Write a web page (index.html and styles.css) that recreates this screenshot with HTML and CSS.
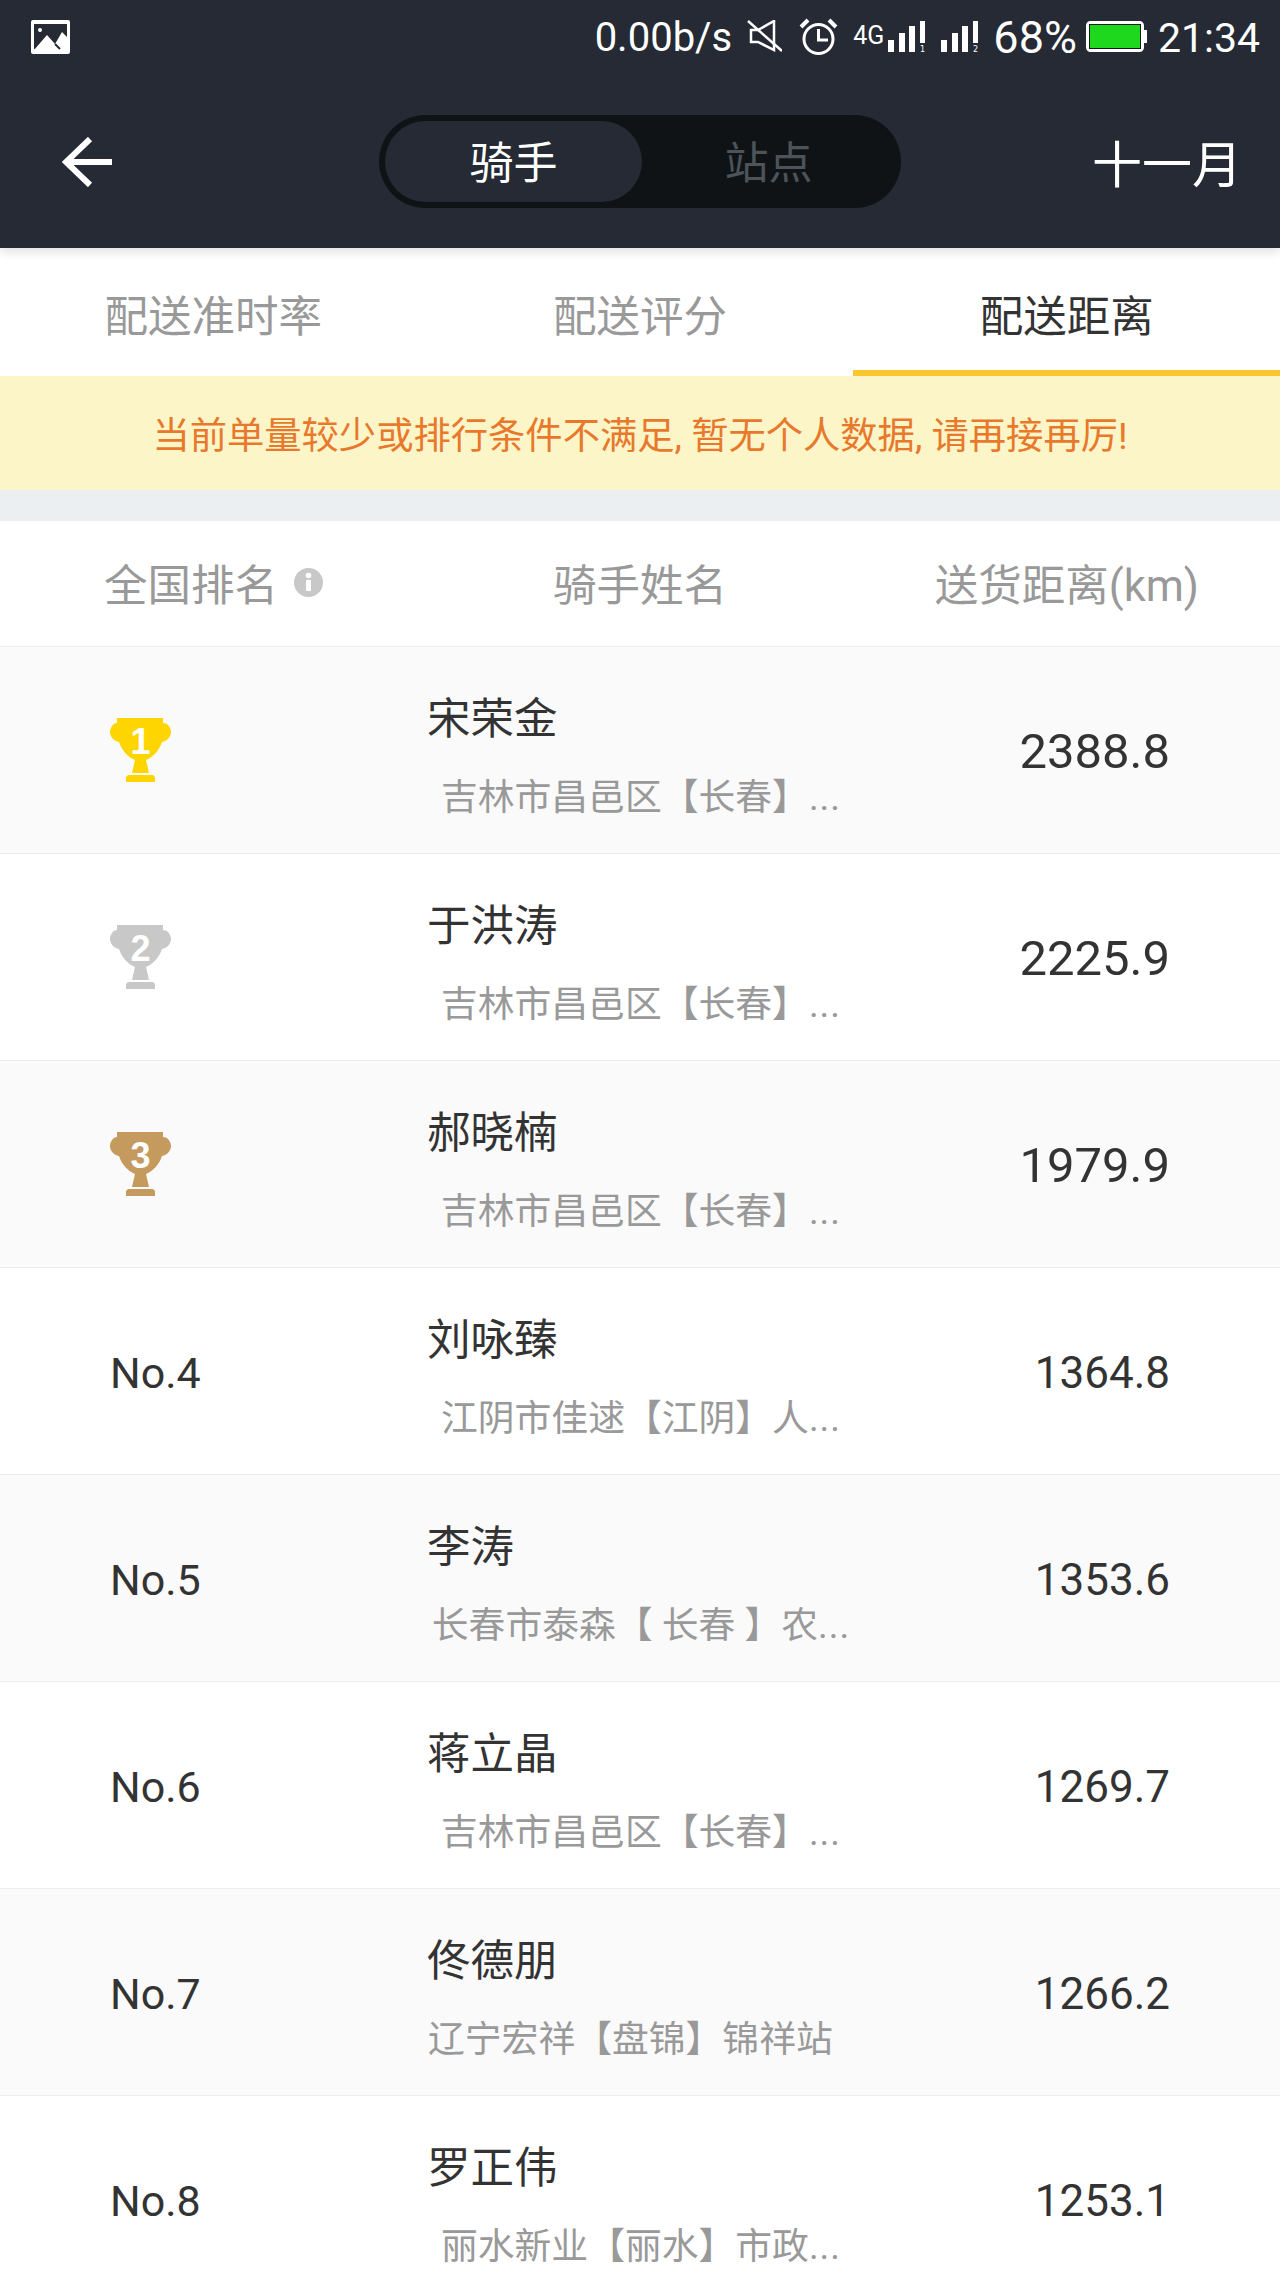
FILE: index.html
```html
<!DOCTYPE html>
<html lang="zh-CN">
<head>
  <meta charset="UTF-8" />
  <meta name="viewport" content="width=device-width, initial-scale=1.0"/>
  <title>骑手排行</title>
  <link rel="stylesheet" href="styles.css">
</head>
<body>

  <svg class="defs" width="0" height="0">
    <symbol id="trophy" viewBox="0 0 63 64">
      <path d="M8 0H54V5C59 5 62 10 62 14C62 19 58 23 53 24C50 33 44 39 37 42L40 55H23L26 42C19 39 13 33 10 24C5 23 1 19 1 14C1 10 4 5 8 5Z"/>
      <path d="M19 57H44L46 59V64H17V59Z"/>
    </symbol>
    <symbol id="bars" viewBox="0 0 38 31">
      <rect x="0" y="19" width="6" height="12"/>
      <rect x="11" y="12" width="6" height="19"/>
      <rect x="21" y="5" width="6" height="26"/>
      <rect x="32" y="0" width="5" height="22"/>
    </symbol>
  </svg>

  <header>
    <div class="status-bar">
      <svg class="st-image" width="39" height="34" viewBox="0 0 39 34">
        <rect width="39" height="34" rx="2" fill="#fff"/>
        <rect x="3" y="4" width="33" height="25" fill="#252a34"/>
        <circle cx="9" cy="10" r="2" fill="#fff"/>
        <path d="M3 30L16 15L24 24L31 12L36 17V32H3Z" fill="#fff"/>
        <path d="M24 24L29 29" stroke="#252a34" stroke-width="2"/>
      </svg>
      <div class="st-right">
        <span class="st-text st-speed">0.00b/s</span>
        <svg class="st-mute" width="35" height="32" viewBox="0 0 35 32" fill="none" stroke="#fff" stroke-width="2.500">
          <path d="M4 10H11L27 1V30L11 22H4Z"/>
          <path d="M1 1L35 31"/>
        </svg>
        <svg class="st-alarm" width="39" height="37" viewBox="0 0 39 37" fill="none" stroke="#fff" stroke-width="3">
          <circle cx="19.500" cy="21" r="14.500"/>
          <path d="M19.500 11V22H29"/>
          <path d="M2 9L9 2M30 2L37 9" stroke-width="4"/>
        </svg>
        <span class="st-net">4G</span>
        <svg class="st-bars" width="38" height="36" fill="#fff"><use href="#bars" width="38" height="31"/><text x="32" y="31">1</text></svg>
        <svg class="st-bars second" width="38" height="36" fill="#fff"><use href="#bars" width="38" height="31"/><text x="32" y="31">2</text></svg>
        <span class="st-text st-pct">68%</span>
        <svg class="st-battery" width="61" height="31" viewBox="0 0 61 31">
          <rect x="1.500" y="1.500" width="55" height="28" rx="3" fill="#1ed81e" stroke="#fff" stroke-width="3"/>
          <rect x="3.500" y="3.500" width="51" height="24" fill="none" stroke="#16181c" stroke-width="1"/>
          <rect x="57" y="9" width="4" height="13" fill="#fff"/>
        </svg>
        <span class="st-text st-time">21:34</span>
      </div>
    </div>

    <div class="nav-bar">
      <svg class="back" width="50" height="50" viewBox="0 0 50 50" fill="none" stroke="#fff" stroke-width="6">
        <path d="M50 25H5"/>
        <path d="M28 2L4 25L28 48"/>
      </svg>
      <div class="toggle">
        <span class="toggle-item active">骑手</span>
        <span class="toggle-item">站点</span>
      </div>
      <span class="month">十一月</span>
    </div>
  </header>

  <div class="tabs">
    <a class="tab">配送准时率</a>
    <a class="tab">配送评分</a>
    <a class="tab active">配送距离</a>
  </div>

  <div class="notice">当前单量较少或排行条件不满足, 暂无个人数据, 请再接再厉!</div>

  <div class="gap"></div>

  <div class="table-head">
    <div class="th-rank">全国排名
      <svg class="info" width="29" height="29" viewBox="0 0 29 29">
        <circle cx="14.500" cy="14.500" r="14.500" fill="#c8c8c8"/>
        <rect x="12" y="12" width="5" height="11" fill="#fff"/>
        <circle cx="14.500" cy="7.500" r="2.800" fill="#fff"/>
      </svg>
    </div>
    <div class="th-name">骑手姓名</div>
    <div class="th-dist">送货距离(km)</div>
  </div>

  <main>
    <div class="row top">
      <div class="rank"><svg class="cup gold" width="63" height="64"><use href="#trophy"/><text x="31.500" y="36" text-anchor="middle">1</text></svg></div>
      <div class="who"><div class="name">宋荣金</div><div class="site">吉林市昌邑区【长春】<span class="dots">...</span></div></div>
      <div class="dist">2388.8</div>
    </div>
    <div class="row top">
      <div class="rank"><svg class="cup silver" width="63" height="64"><use href="#trophy"/><text x="31.500" y="36" text-anchor="middle">2</text></svg></div>
      <div class="who"><div class="name">于洪涛</div><div class="site">吉林市昌邑区【长春】<span class="dots">...</span></div></div>
      <div class="dist">2225.9</div>
    </div>
    <div class="row top">
      <div class="rank"><svg class="cup bronze" width="63" height="64"><use href="#trophy"/><text x="31.500" y="36" text-anchor="middle">3</text></svg></div>
      <div class="who"><div class="name">郝晓楠</div><div class="site">吉林市昌邑区【长春】<span class="dots">...</span></div></div>
      <div class="dist">1979.9</div>
    </div>
    <div class="row">
      <div class="rank">No.4</div>
      <div class="who"><div class="name">刘咏臻</div><div class="site">江阴市佳逑【江阴】人<span class="dots">...</span></div></div>
      <div class="dist">1364.8</div>
    </div>
    <div class="row">
      <div class="rank">No.5</div>
      <div class="who"><div class="name">李涛</div><div class="site">长春市泰森【 长春 】农<span class="dots">...</span></div></div>
      <div class="dist">1353.6</div>
    </div>
    <div class="row">
      <div class="rank">No.6</div>
      <div class="who"><div class="name">蒋立晶</div><div class="site">吉林市昌邑区【长春】<span class="dots">...</span></div></div>
      <div class="dist">1269.7</div>
    </div>
    <div class="row">
      <div class="rank">No.7</div>
      <div class="who"><div class="name">佟德朋</div><div class="site full">辽宁宏祥【盘锦】锦祥站</div></div>
      <div class="dist">1266.2</div>
    </div>
    <div class="row">
      <div class="rank">No.8</div>
      <div class="who"><div class="name">罗正伟</div><div class="site">丽水新业【丽水】市政<span class="dots">...</span></div></div>
      <div class="dist">1253.1</div>
    </div>
  </main>

</body>
</html>
```

FILE: styles.css
```css
html, body {
  height: 100%;
}

body {
  margin: 0;
  background: #fff;
  font-family: Roboto, "Noto Sans CJK SC", sans-serif;
  overflow: hidden;
}

.defs {
  display: block;
}

header {
  background: #252a34;
  color: #fff;
  height: 248px;
  box-shadow: 0 4px 10px rgba(0,0,0,0.12);
  position: relative;
}

.status-bar {
  height: 72px;
  padding: 0 20px 0 31px;
  display: flex;
  justify-content: space-between;
  align-items: center;
}

.st-image {
  margin-top: 2px;
}

.st-right {
  display: flex;
  align-items: center;
  line-height: 50px;
}

.st-text {
  padding-top: 3px;
}

.st-speed {
  font-size: 40px;
  margin-right: 15px;
}

.st-alarm {
  margin-left: 17px;
}

.st-net {
  margin-left: 15px;
  margin-right: 4px;
  font-size: 25px;
  line-height: 30px;
}

.st-bars {
  margin-top: 5px;
}

.st-bars text {
  font-family: "DejaVu Sans", sans-serif;
  font-size: 8px;
}

.st-bars.second {
  margin-left: 15px;
}

.st-pct {
  font-size: 45px;
  margin-left: 14px;
}

.st-battery {
  margin-left: 9px;
}

.st-time {
  font-size: 41px;
  margin-left: 11px;
}

.nav-bar {
  height: 176px;
  display: grid;
  grid-template-columns: 1fr 522px 1fr;
  align-items: center;
}

.back {
  margin-left: 62px;
  margin-top: 3px;
}

.toggle {
  display: flex;
  background: #0f1316;
  border-radius: 47px;
  height: 93px;
  padding: 6px;
  box-sizing: border-box;
  margin-top: 3px;
}

.toggle-item {
  flex: 1;
  display: flex;
  align-items: center;
  justify-content: center;
  font-size: 44px;
  color: #4c545a;
  padding-bottom: 3px;
}

.toggle-item.active {
  flex: none;
  width: 257px;
  background: #252a34;
  border-radius: 41px;
  color: #fff;
}

.month {
  justify-self: end;
  padding-right: 38px;
  font-size: 50px;
  margin-top: 1px;
}

.tabs {
  display: flex;
  height: 128px;
  background: #fff;
}

.tab {
  flex: 1;
  display: flex;
  align-items: center;
  justify-content: center;
  font-size: 43.500px;
  color: #999;
  box-sizing: border-box;
  padding-top: 3px;
}

.tab.active {
  color: #333;
  padding-top: 9px;
  border-bottom: 6px solid #fcc62f;
}

.notice {
  height: 114px;
  background: #fbf5c8;
  color: #e8792c;
  font-size: 37.300px;
  display: flex;
  align-items: center;
  justify-content: center;
}

.gap {
  height: 31px;
  background: #ebeff2;
}

.table-head {
  height: 126px;
  padding-bottom: 3px;
  display: flex;
  align-items: center;
  font-size: 43.500px;
  color: #999;
  border-bottom: 1px solid #eceef0;
  box-sizing: border-box;
}

.th-rank {
  width: 427px;
  padding-left: 104px;
  box-sizing: border-box;
  display: flex;
  align-items: center;
  gap: 16px;
}

.th-name {
  width: 426px;
  text-align: center;
}

.th-dist {
  flex: 1;
  text-align: right;
  padding-right: 81px;
}

.row {
  height: 207px;
  display: flex;
  align-items: center;
  box-sizing: border-box;
  border-bottom: 1px solid #eceef0;
  background: #fff;
}

.row:nth-child(odd) {
  background: #fafafa;
}

.rank {
  width: 428px;
  padding: 3px 0 0 110px;
  box-sizing: border-box;
  font-size: 43px;
  color: #333;
}

.cup {
  display: block;
  margin: -3px 0 0 -1px;
}

.cup text {
  fill: #fff;
  font-family: "Liberation Sans", sans-serif;
  font-weight: bold;
  font-size: 36px;
}

.gold { fill: #ffd500; }
.silver { fill: #c8c8c8; }
.bronze { fill: #c49a5e; }

.who {
  width: 426px;
  margin-top: 12px;
}

.name {
  margin-left: -1px;
  font-size: 43.500px;
  line-height: 60px;
  color: #333;
}

.site {
  margin-top: 23px;
  font-size: 36.800px;
  line-height: 50px;
  color: #999;
  text-align: center;
  white-space: nowrap;
}

.site.full {
  text-align: left;
}

.dots {
  letter-spacing: 1px;
}

.dist {
  flex: 1;
  text-align: right;
  padding: 3px 110px 0 0;
  font-size: 44px;
  color: #333;
}

.top .dist {
  font-size: 49px;
}
```
